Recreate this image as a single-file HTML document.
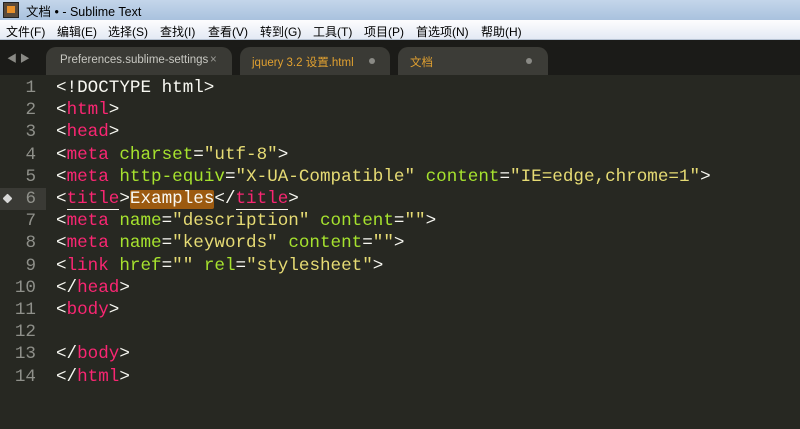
<!DOCTYPE html>
<html><head><style>
body{margin:0;width:800px;height:429px;overflow:hidden;background:#272822;font-family:"Liberation Sans","Noto Sans CJK SC",sans-serif;position:relative}
.title{position:absolute;left:0;top:0;width:800px;height:20px;background:linear-gradient(#c4d6ea,#a9c2de);font-size:12.5px;color:#000}
.title span{position:absolute;left:26px;top:1px}
.ico{position:absolute;left:3px;top:2px;width:14px;height:14px;background:#5a4a3a;border:1px solid #222}
.ico:after{content:"";position:absolute;left:3px;top:3px;width:8px;height:7px;background:#e8902a}
.menu{position:absolute;left:0;top:20px;width:800px;height:20px;background:linear-gradient(#fdfdfe,#e4eaf4);font-size:12px;color:#000;border-bottom:1px solid #b8c4d4;box-sizing:border-box}
.menu span{position:absolute;top:3px}
.tabbar{position:absolute;left:0;top:40px;width:800px;height:35px;background:#1b1b18}
.tab{position:absolute;top:7px;height:28px;background:#3a3a35;border-radius:10px 10px 0 0;font-size:11.5px}
.tab span{position:absolute;top:7px}
.dot{position:absolute;top:11px;width:6px;height:6px;border-radius:3px;background:#8a8a85}
.code{position:absolute;left:0;top:77px;font-family:"Liberation Mono",monospace;font-size:17.6px;line-height:22.2px;color:#f8f8f2;white-space:pre}
.ln{position:absolute;left:0;width:36px;text-align:right;color:#8f908a}
.l{position:absolute;left:56px}
.t{color:#f92672}.a{color:#a6e22e}.s{color:#e6db74}
</style></head><body>
<div class="title"><div class="ico"></div><span>文档 • - Sublime Text</span></div>
<div class="menu"><span style="left:6px">文件(F)</span><span style="left:57px">编辑(E)</span><span style="left:108px">选择(S)</span><span style="left:160px">查找(I)</span><span style="left:208px">查看(V)</span><span style="left:260px">转到(G)</span><span style="left:313px">工具(T)</span><span style="left:364px">项目(P)</span><span style="left:416px">首选项(N)</span><span style="left:481px">帮助(H)</span></div>
<div class="tabbar">
<div style="position:absolute;left:7px;top:10px;color:#8a8a85;font-size:10px">◀ ▶</div>
<div class="tab" style="left:46px;width:186px"><span style="left:14px;color:#c8c8c2">Preferences.sublime-settings</span><span style="left:164px;color:#9a9a95">×</span></div>
<div class="tab" style="left:240px;width:150px"><span style="left:12px;color:#e0a030">jquery 3.2 设置.html</span><div class="dot" style="left:129px"></div></div>
<div class="tab" style="left:398px;width:150px;background:#3c3c37"><span style="left:12px;color:#e0a030">文档</span><div class="dot" style="left:128px"></div></div>
</div>
<div style="position:absolute;left:0;top:188px;width:46px;height:22px;background:#3a3a35"></div>
<div style="position:absolute;left:130px;top:190px;width:84px;height:19px;background:#9c5a10;border-radius:2px"></div>
<div style="position:absolute;left:4px;top:195px;width:7px;height:7px;background:#d8d8d8;transform:rotate(45deg);border-radius:1px"></div>
<div class="code">
<div class="ln" style="top:0">1</div><div class="l" style="top:0">&lt;!DOCTYPE html&gt;</div>
<div class="ln" style="top:22.2px">2</div><div class="l" style="top:22.2px">&lt;<span class="t">html</span>&gt;</div>
<div class="ln" style="top:44.4px">3</div><div class="l" style="top:44.4px">&lt;<span class="t">head</span>&gt;</div>
<div class="ln" style="top:66.6px">4</div><div class="l" style="top:66.6px">&lt;<span class="t">meta</span> <span class="a">charset</span>=<span class="s">"utf-8"</span>&gt;</div>
<div class="ln" style="top:88.8px">5</div><div class="l" style="top:88.8px">&lt;<span class="t">meta</span> <span class="a">http-equiv</span>=<span class="s">"X-UA-Compatible"</span> <span class="a">content</span>=<span class="s">"IE=edge,chrome=1"</span>&gt;</div>
<div class="ln" style="top:111px">6</div><div class="l" style="top:111px">&lt;<span class="t" style="border-bottom:1px solid #f8f8f2">title</span>&gt;Examples&lt;/<span class="t" style="border-bottom:1px solid #f8f8f2">title</span>&gt;</div>
<div class="ln" style="top:133.2px">7</div><div class="l" style="top:133.2px">&lt;<span class="t">meta</span> <span class="a">name</span>=<span class="s">"description"</span> <span class="a">content</span>=<span class="s">""</span>&gt;</div>
<div class="ln" style="top:155.4px">8</div><div class="l" style="top:155.4px">&lt;<span class="t">meta</span> <span class="a">name</span>=<span class="s">"keywords"</span> <span class="a">content</span>=<span class="s">""</span>&gt;</div>
<div class="ln" style="top:177.6px">9</div><div class="l" style="top:177.6px">&lt;<span class="t">link</span> <span class="a">href</span>=<span class="s">""</span> <span class="a">rel</span>=<span class="s">"stylesheet"</span>&gt;</div>
<div class="ln" style="top:199.8px">10</div><div class="l" style="top:199.8px">&lt;/<span class="t">head</span>&gt;</div>
<div class="ln" style="top:222px">11</div><div class="l" style="top:222px">&lt;<span class="t">body</span>&gt;</div>
<div class="ln" style="top:244.2px">12</div>
<div class="ln" style="top:266.4px">13</div><div class="l" style="top:266.4px">&lt;/<span class="t">body</span>&gt;</div>
<div class="ln" style="top:288.6px">14</div><div class="l" style="top:288.6px">&lt;/<span class="t">html</span>&gt;</div>
</div>
</body></html>
